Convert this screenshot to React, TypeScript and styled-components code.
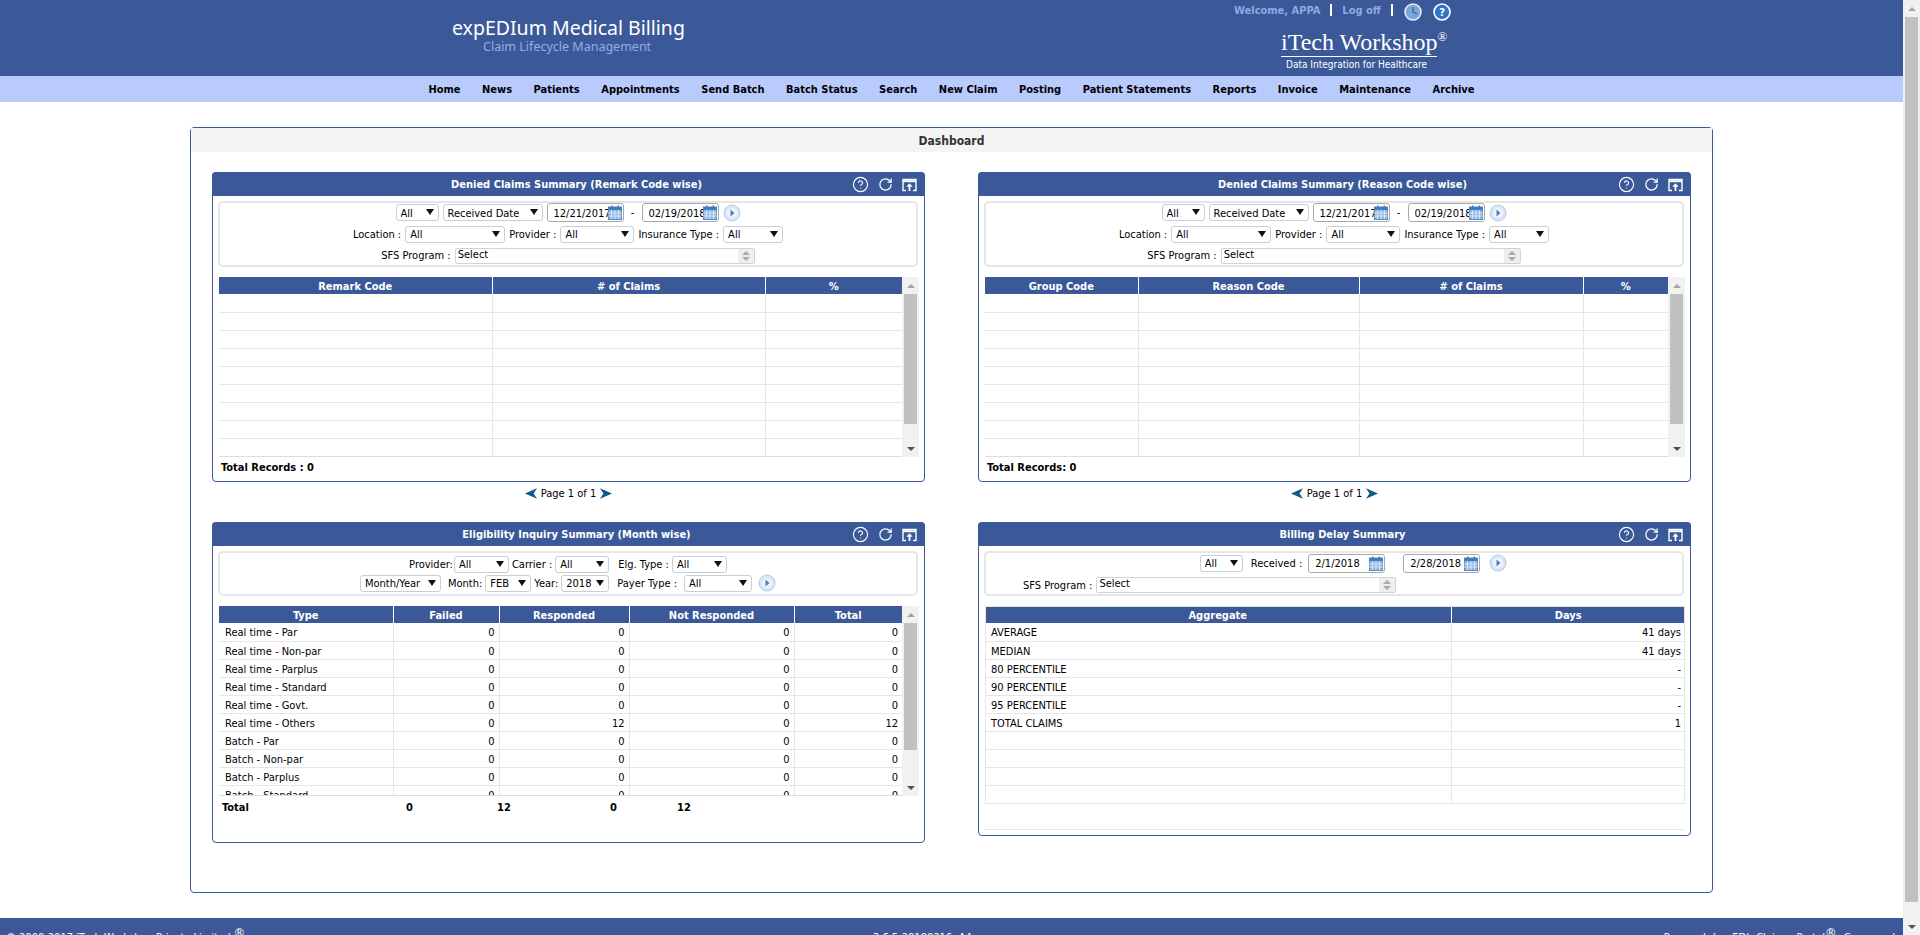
import React from 'react';
import styled, { createGlobalStyle } from 'styled-components';
import { CircleHelp, RotateCw } from 'lucide-react';

const blue = '#3b5998';
const line = '#e6e6e6';

const GlobalStyle = createGlobalStyle`
    html, body {
        margin: 0;
        padding: 0;
        height: 100%;
        overflow: hidden;
        background: #fff;
    }
    body, input, select {
        font-family: "DejaVu Sans", Tahoma, sans-serif;
        font-stretch: condensed;
        font-size: 11px;
        color: #000;
    }
`;

const Screen = styled.div`
    display: flex;
    width: 1920px;
    height: 935px;
    overflow: hidden;
`;

const Page = styled.div`
    width: 1903px;
    flex: none;
`;

const Header = styled.header`
    display: flex;
    justify-content: space-between;
    height: 76px;
    padding: 0 452px;
    box-sizing: border-box;
    background: ${blue};
`;

const Brand = styled.div`
    padding-top: 15px;
    color: #fff;
`;

const BrandTitle = styled.div`
    font-family: "Noto Sans", sans-serif;
    font-stretch: normal;
    font-size: 19.5px;
    line-height: 26px;
    white-space: nowrap;
`;

const BrandSub = styled.div`
    margin-left: 31px;
    margin-top: -2px;
    font-family: "Noto Sans", sans-serif;
    font-stretch: normal;
    font-size: 12.5px;
    line-height: 16px;
    color: #93ade6;
    white-space: nowrap;
`;

const Account = styled.div`
    width: 217px;
`;

const AccountBar = styled.div`
    display: flex;
    align-items: center;
    height: 20px;
    font-weight: bold;
    color: #8fa9e2;
    white-space: nowrap;
`;

const BarDivider = styled.span`
    width: 2px;
    height: 12px;
    margin: 0 10px;
    background: #fff;
`;

const RoundIcon = styled.svg`
    width: 18px;
    height: 18px;
    margin-left: ${p => p.$left || 0}px;
`;

const BarIcon = styled(RoundIcon)`
    margin-top: 3px;
`;

const Company = styled.div`
    width: 156px;
    margin: 8px 0 0 47px;
    color: #fff;
`;

const CompanyName = styled.div`
    font-family: "Liberation Serif", serif;
    font-stretch: normal;
    font-size: 24px;
    line-height: 28px;
    border-bottom: 1px solid #fff;
    white-space: nowrap;
    sup {
        font-size: 13px;
        line-height: 0;
        vertical-align: 9px;
    }
`;

const CompanyTag = styled.div`
    margin-left: 5px;
    font-size: 10px;
    line-height: 15px;
    white-space: nowrap;
`;

const Nav = styled.nav`
    display: flex;
    justify-content: center;
    gap: 21.5px;
    height: 26px;
    background: #b9cbfc;
    line-height: 28px;
    font-weight: bold;
    white-space: nowrap;
`;

const Panel = styled.section`
    width: 1523px;
    margin: 25px 0 0 190px;
    box-sizing: border-box;
    border: 1px solid ${blue};
    border-radius: 4px;
    padding-bottom: 49px;
`;

const PanelTitle = styled.h1`
    margin: 0;
    height: 24px;
    line-height: 26px;
    background: #f4f4f4;
    text-align: center;
    font-size: 12px;
    font-weight: bold;
    color: #333;
`;

const CardGrid = styled.div`
    display: grid;
    grid-template-columns: 713px 713px;
    grid-template-rows: 350px auto;
    column-gap: 53px;
    align-items: start;
    padding: 20px 0 0 21px;
`;

const Card = styled.article`
    position: relative;
    box-sizing: border-box;
    height: ${p => p.$height}px;
    border: 1px solid ${blue};
    border-radius: 4px;
`;

const CardTitle = styled.h2`
    margin: -1px -1px 0;
    height: 24px;
    padding-left: 16px;
    border-radius: 4px 4px 0 0;
    background: ${blue};
    color: #fff;
    line-height: 26px;
    text-align: center;
    font-size: 11px;
    font-weight: bold;
`;

const CardTools = styled.div`
    position: absolute;
    top: 3px;
    right: 7px;
    display: flex;
    align-items: center;
    gap: 9px;
    color: #fff;
`;

const Filters = styled.div`
    display: flex;
    flex-direction: column;
    justify-content: center;
    gap: ${p => p.$gap ?? 3}px;
    box-sizing: border-box;
    height: ${p => p.$height}px;
    margin: 5px 6px 10px 5px;
    border: 2px solid ${line};
    border-radius: 5px;
`;

const FilterRow = styled.div`
    display: flex;
    align-items: center;
    justify-content: ${p => (p.$start ? 'flex-start' : 'center')};
    gap: ${p => p.$gap ?? 4}px;
    padding-left: ${p => p.$pad || 0}px;
    height: ${p => p.$height || 19}px;
    white-space: nowrap;
`;

const Label = styled.label`
    white-space: nowrap;
    margin-left: ${p => p.$left || 0}px;
`;

const Dash = styled.span`
    width: 4px;
    margin-left: 3px;
    text-align: center;
`;

const SelectWrap = styled.span`
    position: relative;
    display: inline-block;
    width: ${p => p.$w}px;
    height: 17px;
    margin-left: ${p => p.$left || 0}px;
    &::after {
        content: '';
        position: absolute;
        top: 5px;
        right: 5px;
        border-left: 4px solid transparent;
        border-right: 4px solid transparent;
        border-top: 6px solid #111;
        pointer-events: none;
    }
`;

const NativeSelect = styled.select`
    appearance: none;
    width: 100%;
    height: 100%;
    box-sizing: border-box;
    padding: 1px 0 0 4px;
    border: 1px solid #c4d0d6;
    border-radius: 3px;
    background: #fff;
    font-size: 11px;
`;

const ListBox = styled.div`
    display: flex;
    width: ${p => p.$w || 300}px;
    height: 16px;
    box-sizing: border-box;
    border: 1px solid #cfd4d8;
    border-radius: 2px;
    line-height: 12px;
`;

const ListText = styled.span`
    flex: 1;
    padding-left: 2px;
`;

const ListSpin = styled.span`
    display: flex;
    flex-direction: column;
    align-items: center;
    justify-content: center;
    gap: 2px;
    width: 16px;
    background: #eee;
`;

const SpinArrow = styled.i`
    border-left: 4px solid transparent;
    border-right: 4px solid transparent;
    ${p => (p.$up ? 'border-bottom' : 'border-top')}: 4px solid #a9a9a9;
`;

const DateBox = styled.span`
    display: inline-flex;
    align-items: center;
    justify-content: space-between;
    width: 77px;
    height: 19px;
    box-sizing: border-box;
    margin-left: ${p => p.$left || 0}px;
    padding: 0 1px 0 ${p => p.$pad || 6}px;
    border: 1px solid #a9a9a9;
    border-radius: 3px;
`;

const DateInput = styled.input`
    width: 56px;
    flex: 1;
    min-width: 0;
    padding: 1px 0 0;
    border: 0;
    outline: 0;
    background: transparent;
    font-size: 11px;
`;

const TableArea = styled.div`
    display: flex;
    margin: 0 5px 0 6px;
    height: ${p => p.$height}px;
`;

const TableClip = styled.div`
    flex: 1;
    min-width: 0;
    overflow: hidden;
    border-bottom: ${p => (p.$open ? 0 : `1px solid #ddd`)};
`;

const Grid = styled.table`
    width: 100%;
    table-layout: fixed;
    border-collapse: collapse;
`;

const Col = styled.col`
    width: ${p => p.$w}px;
`;

const Th = styled.th`
    height: 17px;
    padding: 1px 0 0;
    box-sizing: border-box;
    background: ${blue};
    border-right: 1px solid #fff;
    color: #fff;
    font-weight: bold;
    font-size: 11px;
    text-align: center;
    &:last-child {
        border-right: 0;
    }
`;

const Td = styled.td`
    height: 18px;
    box-sizing: border-box;
    padding: 2px 4px 0 ${p => (p.$num ? 4 : 6)}px;
    border-right: 1px solid ${line};
    border-bottom: 1px solid ${line};
    text-align: ${p => (p.$num ? 'right' : 'left')};
    line-height: 15px;
    white-space: nowrap;
    &:last-child {
        border-right: 0;
    }
`;

const BoxedGrid = styled(Grid)`
    outline: 1px solid ${line};
    outline-offset: -1px;
`;

const CardRule = styled.div`
    height: 1px;
    margin: 25px 6px 0 5px;
    background: ${line};
`;

const Scrollbar = styled.div`
    display: flex;
    flex-direction: column;
    align-items: center;
    flex: none;
    width: 17px;
    background: #f1f1f1;
`;

const ScrollButton = styled.div`
    display: flex;
    align-items: center;
    justify-content: center;
    flex: none;
    width: 100%;
    height: 17px;
`;

const ScrollArrow = styled.i`
    border-left: 4px solid transparent;
    border-right: 4px solid transparent;
    ${p => (p.$up ? 'border-bottom' : 'border-top')}: 4px solid ${p => (p.$up ? '#a3a3a3' : '#505050')};
`;

const ScrollThumb = styled.div`
    flex: none;
    width: 13px;
    height: ${p => p.$height}px;
    margin-bottom: auto;
    background: #c1c1c1;
`;

const PageScroll = styled(Scrollbar)`
    height: 935px;
`;

const TotalRecords = styled.div`
    padding: 3px 0 0 8px;
    font-weight: bold;
    line-height: 16px;
`;

const TotalRow = styled.div`
    display: grid;
    grid-template-columns: 184px 91px 113px 67px auto;
    padding: 4px 0 0 9px;
    font-weight: bold;
    line-height: 16px;
`;

const Pager = styled.div`
    display: flex;
    align-items: center;
    justify-content: center;
    gap: 4px;
    height: 22px;
`;

const PagerArrow = styled.svg`
    width: 12px;
    height: 11px;
`;

const Footer = styled.footer`
    display: grid;
    grid-template-columns: 867px auto 1fr;
    height: 40px;
    margin-top: 25px;
    padding: 12px 8px 0 6px;
    box-sizing: border-box;
    background: ${blue};
    color: #fff;
    white-space: nowrap;
    line-height: 16px;
    sup {
        font-size: 13px;
        line-height: 0;
        vertical-align: 4px;
    }
`;

const FooterRight = styled.span`
    text-align: right;
    word-spacing: 4px;
`;

const navItems = ['Home', 'News', 'Patients', 'Appointments', 'Send Batch', 'Batch Status', 'Search', 'New Claim', 'Posting', 'Patient Statements', 'Reports', 'Invoice', 'Maintenance', 'Archive'];

const eligibilityRows = [
    ['Real time - Par', 0, 0, 0, 0],
    ['Real time - Non-par', 0, 0, 0, 0],
    ['Real time - Parplus', 0, 0, 0, 0],
    ['Real time - Standard', 0, 0, 0, 0],
    ['Real time - Govt.', 0, 0, 0, 0],
    ['Real time - Others', 0, 12, 0, 12],
    ['Batch - Par', 0, 0, 0, 0],
    ['Batch - Non-par', 0, 0, 0, 0],
    ['Batch - Parplus', 0, 0, 0, 0],
    ['Batch - Standard', 0, 0, 0, 0],
];

const delayRows = [
    ['AVERAGE', '41 days'],
    ['MEDIAN', '41 days'],
    ['80 PERCENTILE', '-'],
    ['90 PERCENTILE', '-'],
    ['95 PERCENTILE', '-'],
    ['TOTAL CLAIMS', '1'],
    ['', ''],
    ['', ''],
    ['', ''],
    ['', ''],
];

const Select = ({ w, value, left }: { w: number, value: string, left?: number }) => (
    <SelectWrap $w={w} $left={left}>
        <NativeSelect defaultValue={value}>
            <option>{value}</option>
        </NativeSelect>
    </SelectWrap>
);

const CalendarIcon = () => (
    <svg width="14" height="15" viewBox="0 0 14 15">
        <rect x="0.5" y="2" width="13" height="12.5" fill="#8db7e4" stroke="#5a8cc4" />
        <rect x="0.5" y="2" width="13" height="3" fill="#3f7cbf" />
        <rect x="3" y="0.5" width="1.5" height="3" fill="#3f7cbf" />
        <rect x="9.5" y="0.5" width="1.5" height="3" fill="#3f7cbf" />
        <path d="M0 8h14M0 11h14M3.5 5v9M7 5v9M10.5 5v9" stroke="#e4f0fb" strokeWidth="0.8" />
    </svg>
);

const DateField = ({ value, left, pad }: { value: string, left?: number, pad?: number }) => (
    <DateBox $left={left} $pad={pad}>
        <DateInput defaultValue={value} readOnly />
        <CalendarIcon />
    </DateBox>
);

const GoButton = ({ left }: { left?: number }) => (
    <RoundIcon $left={left} viewBox="0 0 18 18">
        <circle cx="9" cy="9" r="8" fill="#d9e6f7" stroke="#b5cbe8" />
        <circle cx="9" cy="9" r="5" fill="#eef4fc" />
        <path d="M7.5 5.5 L11.5 9 L7.5 12.5 Z" fill="#4f7fba" />
    </RoundIcon>
);

const SfsProgram = ({ w }: { w?: number }) => (
    <ListBox $w={w}>
        <ListText>Select</ListText>
        <ListSpin>
            <SpinArrow $up />
            <SpinArrow />
        </ListSpin>
    </ListBox>
);

const PopoutIcon = () => (
    <svg width="15" height="14" viewBox="0 0 15 14" fill="none" stroke="#fff">
        <path d="M4 12.5H1V1.5H14V12.5H11" strokeWidth="1.4" />
        <path d="M1 3.2H14" strokeWidth="2" />
        <path d="M7.5 13V7" strokeWidth="1.8" />
        <path d="M4.8 8.4 L7.5 5.6 L10.2 8.4 Z" fill="#fff" strokeWidth="0.5" />
    </svg>
);

const Tools = () => (
    <CardTools>
        <CircleHelp size={17} strokeWidth={1.6} />
        <RotateCw size={15} strokeWidth={2} />
        <PopoutIcon />
    </CardTools>
);

const MiniScrollbar = ({ thumb }: { thumb: number }) => (
    <Scrollbar>
        <ScrollButton><ScrollArrow $up /></ScrollButton>
        <ScrollThumb $height={thumb} />
        <ScrollButton><ScrollArrow /></ScrollButton>
    </Scrollbar>
);

const DataTable = ({ widths, heads, rows, num = [] }: { widths: number[], heads: string[], rows: (string | number)[][], num?: number[] }) => (
    <Grid>
        <colgroup>
            {widths.map((w, i) => <Col key={i} $w={w} />)}
        </colgroup>
        <thead>
            <tr>{heads.map(h => <Th key={h}>{h}</Th>)}</tr>
        </thead>
        <tbody>
            {rows.map((row, i) => (
                <tr key={i}>
                    {row.map((cell, j) => <Td key={j} $num={num.includes(j)}>{cell}</Td>)}
                </tr>
            ))}
        </tbody>
    </Grid>
);

const DateFilters = () => (
    <>
        <FilterRow>
            <Select w={43} value="All" />
            <Select w={100} value="Received Date" />
            <DateField value="12/21/2017" />
            <Dash>-</Dash>
            <DateField value="02/19/2018" left={3} />
            <GoButton />
        </FilterRow>
        <FilterRow>
            <Label>Location :</Label>
            <Select w={100} value="All" />
            <Label>Provider :</Label>
            <Select w={74} value="All" />
            <Label>Insurance Type :</Label>
            <Select w={60} value="All" />
        </FilterRow>
        <FilterRow>
            <Label>SFS Program :</Label>
            <SfsProgram />
        </FilterRow>
    </>
);

const PageControls = () => (
    <Pager>
        <PagerArrow viewBox="0 0 14 12"><path d="M0 6 L14 0 L10 6 L14 12 Z" fill="#0f5a86" /></PagerArrow>
        <span>Page 1 of 1</span>
        <PagerArrow viewBox="0 0 14 12"><path d="M14 6 L0 0 L4 6 L0 12 Z" fill="#0f5a86" /></PagerArrow>
    </Pager>
);

const Empty = (cols: number) => Array.from({ length: 9 }, () => Array.from({ length: cols }, () => ''));

const App = () => (
    <Screen>
        <GlobalStyle />
        <Page>
            <Header>
                <Brand>
                    <BrandTitle>expEDIum Medical Billing</BrandTitle>
                    <BrandSub>Claim Lifecycle Management</BrandSub>
                </Brand>
                <Account>
                    <AccountBar>
                        Welcome, APPA
                        <BarDivider />
                        Log off
                        <BarDivider />
                        <BarIcon $left={1} viewBox="0 0 18 18">
                            <circle cx="9" cy="9" r="8" fill="#7fa6d8" stroke="#e8eef8" strokeWidth="1.5" />
                            <path d="M9 4v5l4 2" stroke="#2f5f9f" strokeWidth="1.2" fill="none" />
                        </BarIcon>
                        <BarIcon $left={11} viewBox="0 0 18 18">
                            <circle cx="9" cy="9" r="8" fill="#2f74c8" stroke="#fff" strokeWidth="1.6" />
                            <text x="9" y="13" textAnchor="middle" fontSize="11" fontWeight="bold" fill="#fff">?</text>
                        </BarIcon>
                    </AccountBar>
                    <Company>
                        <CompanyName>iTech Workshop<sup>®</sup></CompanyName>
                        <CompanyTag>Data Integration for Healthcare</CompanyTag>
                    </Company>
                </Account>
            </Header>
            <Nav>
                {navItems.map(item => <span key={item}>{item}</span>)}
            </Nav>
            <Panel>
                <PanelTitle>Dashboard</PanelTitle>
                <CardGrid>
                    <div>
                        <Card $height={310}>
                            <CardTitle>Denied Claims Summary (Remark Code wise)</CardTitle>
                            <Tools />
                            <Filters $height={66}><DateFilters /></Filters>
                            <TableArea $height={180}>
                                <TableClip>
                                    <DataTable widths={[273, 273, 137]} heads={['Remark Code', '# of Claims', '%']} rows={Empty(3)} />
                                </TableClip>
                                <MiniScrollbar thumb={130} />
                            </TableArea>
                            <TotalRecords>Total Records : 0</TotalRecords>
                        </Card>
                        <PageControls />
                    </div>
                    <div>
                        <Card $height={310}>
                            <CardTitle>Denied Claims Summary (Reason Code wise)</CardTitle>
                            <Tools />
                            <Filters $height={66}><DateFilters /></Filters>
                            <TableArea $height={180}>
                                <TableClip>
                                    <DataTable widths={[153, 221, 224, 85]} heads={['Group Code', 'Reason Code', '# of Claims', '%']} rows={Empty(4)} />
                                </TableClip>
                                <MiniScrollbar thumb={130} />
                            </TableArea>
                            <TotalRecords>Total Records: 0</TotalRecords>
                        </Card>
                        <PageControls />
                    </div>
                    <Card $height={321}>
                        <CardTitle>Eligibility Inquiry Summary (Month wise)</CardTitle>
                        <Tools />
                        <Filters $height={45} $gap={1}>
                            <FilterRow $gap={3} $height={18}>
                                <Label>Provider:</Label>
                                <Select w={55} value="All" left={-2} />
                                <Label>Carrier :</Label>
                                <Select w={54} value="All" />
                                <Label $left={6}>Elg. Type :</Label>
                                <Select w={55} value="All" />
                            </FilterRow>
                            <FilterRow $gap={3} $height={18}>
                                <Select w={81} value="Month/Year" />
                                <Label $left={4}>Month:</Label>
                                <Select w={46} value="FEB" />
                                <Label>Year:</Label>
                                <Select w={48} value="2018" />
                                <Label $left={5}>Payer Type :</Label>
                                <Select w={68} value="All" left={4} />
                                <GoButton left={3} />
                            </FilterRow>
                        </Filters>
                        <TableArea $height={190}>
                            <TableClip>
                                <DataTable
                                    widths={[174, 106, 130, 165, 108]}
                                    heads={['Type', 'Failed', 'Responded', 'Not Responded', 'Total']}
                                    rows={eligibilityRows}
                                    num={[1, 2, 3, 4]}
                                />
                            </TableClip>
                            <MiniScrollbar thumb={127} />
                        </TableArea>
                        <TotalRow>
                            <span>Total</span>
                            <span>0</span>
                            <span>12</span>
                            <span>0</span>
                            <span>12</span>
                        </TotalRow>
                    </Card>
                    <Card $height={314}>
                        <CardTitle>Billing Delay Summary</CardTitle>
                        <Tools />
                        <Filters $height={45} $gap={4}>
                            <FilterRow $gap={6} $pad={39}>
                                <Select w={43} value="All" />
                                <Label $left={2}>Received :</Label>
                                <DateField value="2/1/2018" />
                                <DateField value="2/28/2018" left={12} />
                                <GoButton left={3} />
                            </FilterRow>
                            <FilterRow $start $pad={37} $gap={4} $height={17}>
                                <Label>SFS Program :</Label>
                                <SfsProgram />
                            </FilterRow>
                        </Filters>
                        <TableArea $height={198}>
                            <TableClip $open>
                                <BoxedGrid>
                                    <colgroup>
                                        <Col $w={466} />
                                        <Col $w={234} />
                                    </colgroup>
                                    <thead>
                                        <tr><Th>Aggregate</Th><Th>Days</Th></tr>
                                    </thead>
                                    <tbody>
                                        {delayRows.map((row, i) => (
                                            <tr key={i}>
                                                <Td>{row[0]}</Td>
                                                <Td $num>{row[1]}</Td>
                                            </tr>
                                        ))}
                                    </tbody>
                                </BoxedGrid>
                            </TableClip>
                        </TableArea>
                        <CardRule />
                    </Card>
                </CardGrid>
            </Panel>
            <Footer>
                <span>© 2000-2017 iTech Workshop Private Limited <sup>®</sup></span>
                <span>3.6.5-20180216- A4</span>
                <FooterRight>Powered by EDI Claims Portal<sup>®</sup> Compared</FooterRight>
            </Footer>
        </Page>
        <PageScroll>
            <ScrollButton><ScrollArrow $up /></ScrollButton>
            <ScrollThumb $height={885} />
            <ScrollButton><ScrollArrow /></ScrollButton>
        </PageScroll>
    </Screen>
);

export default App;
